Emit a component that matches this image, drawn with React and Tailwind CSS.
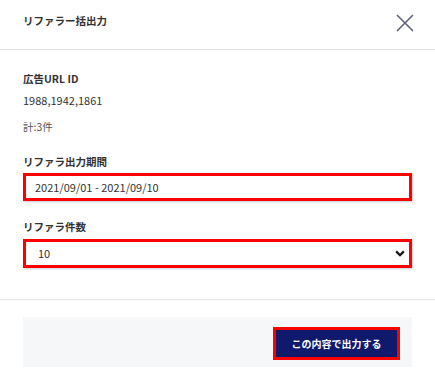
import React from "react";

export default function App() {
  return (
    <div
      className="w-[435px] h-[373px] bg-white text-[#333] overflow-hidden"
      style={{ fontFamily: '"Noto Sans CJK JP", "Noto Sans", sans-serif' }}
    >
      <div className="h-[50px] border-b border-[#e3e3e3] px-[23px] pt-[12px] flex items-start justify-between">
        <div className="text-[10.5px] font-bold leading-[18px]">リファラー括出力</div>
        <svg width="20" height="20" viewBox="0 0 20 20" className="mr-[-3px] mt-[1px]">
          <path d="M2 2 L18 18 M18 2 L2 18" stroke="#5d6179" strokeWidth="1.6" fill="none" />
        </svg>
      </div>
      <div className="px-[23px] pt-[21px]">
        <div className="text-[10.5px] font-bold leading-[16px]">広告URL ID</div>
        <div className="mt-[5px] text-[11px] leading-[16px]">1988,1942,1861</div>
        <div className="mt-[11px] text-[10.5px] leading-[16px] text-[#555]">計:3件</div>
        <div className="mt-[19px] text-[10.5px] font-bold leading-[16px]">リファラ出力期間</div>
        <div className="mt-[3px] h-[28px] border-[3px] border-[#ff0000] flex items-center pl-[9px] text-[11px] shadow-[1px_1px_2px_rgba(80,90,130,0.35)]">
          2021/09/01 - 2021/09/10
        </div>
        <div className="mt-[18px] text-[10.5px] font-bold leading-[16px]">リファラ件数</div>
        <div className="mt-[4px] h-[29px] border-[3px] border-[#ff0000] flex items-center justify-between pl-[12px] pr-[4px] text-[11px] shadow-[1px_1px_2px_rgba(80,90,130,0.3)]">
          <span>10</span>
          <svg width="10" height="7" viewBox="0 0 10 7">
            <path d="M1.2 1.4 L5 5.2 L8.8 1.4" stroke="#111" strokeWidth="2.2" fill="none" />
          </svg>
        </div>
      </div>
      <div className="mt-[31px] border-t border-[#e3e3e3]" />
      <div className="mx-[23px] mt-[17px] h-[50px] bg-[#f6f7f9] flex justify-end items-start pt-[10px] pr-[12px]">
        <button className="w-[127px] h-[33px] border-[3px] border-[#ff0000] bg-[#0f1a6d] text-white text-[10px] font-bold flex items-center justify-center">
          この内容で出力する
        </button>
      </div>
    </div>
  );
}
